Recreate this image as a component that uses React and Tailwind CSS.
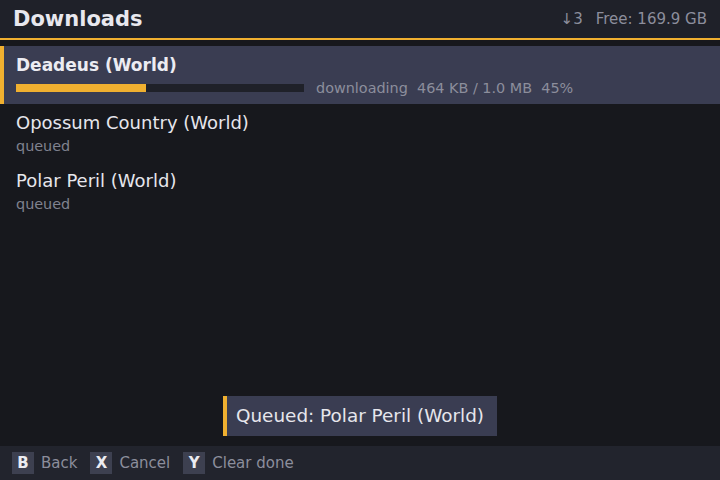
export default function App() {
  const items = [
    { title: "Opossum Country (World)", status: "queued" },
    { title: "Polar Peril (World)", status: "queued" },
  ];

  const keys = [
    ["B", "Back"],
    ["X", "Cancel"],
    ["Y", "Clear done"],
  ];

  return (
    <div
      className="w-[720px] h-[480px] flex flex-col bg-[#17181d] text-[#e6e6ec] overflow-hidden"
      style={{ fontFamily: '"DejaVu Sans", sans-serif' }}
    >
      <div className="h-[38px] shrink-0 flex items-center justify-between pl-[13px] pr-[13px] bg-[#1f2129]">
        <h1 className="text-[21px] font-bold leading-none text-[#e8e8ee]">Downloads</h1>
        <div className="flex items-center gap-[13px] text-[15px] text-[#8c8e9c]">
          <span>↓3</span>
          <span>Free: 169.9 GB</span>
        </div>
      </div>
      <div className="h-[2px] shrink-0 bg-[#f0b030]" />

      <div className="flex-1 flex flex-col pt-[6px]">
        <div className="h-[58px] flex bg-[#3a3d52]">
          <div className="w-[4px] bg-[#f0b030]" />
          <div className="flex-1 flex flex-col pl-[12px] pt-[7px]">
            <div className="text-[17px] font-bold leading-[24px] text-[#ececf2]">Deadeus (World)</div>
            <div className="flex items-center gap-[12px] mt-[3px]">
              <div className="w-[288px] h-[8px] bg-[#1f2129]">
                <div className="h-full w-[130px] bg-[#f0b030]" />
              </div>
              <span className="text-[14.4px] text-[#8c8e9c] leading-none pt-[1px]">
                downloading&nbsp; 464 KB / 1.0 MB&nbsp; 45%
              </span>
            </div>
          </div>
        </div>

        {items.map((it) => (
          <div key={it.title} className="h-[58px] flex flex-col pl-[16px] pt-[7px]">
            <div className="text-[18px] leading-[24px] text-[#e6e6ec]">{it.title}</div>
            <div className="text-[14.4px] leading-[18px] mt-[2px] text-[#80828f]">{it.status}</div>
          </div>
        ))}

        <div className="flex-1" />

        <div className="flex justify-center mb-[10px]">
          <div className="flex h-[40px] bg-[#3a3d52]">
            <div className="w-[4px] bg-[#f0b030]" />
            <div className="flex items-center pl-[9px] pr-[13px] text-[18.4px] text-[#e6e6ec]">
              Queued: Polar Peril (World)
            </div>
          </div>
        </div>
      </div>

      <div className="h-[34px] shrink-0 flex items-center gap-[13px] px-[12px] bg-[#22242d] text-[15px] text-[#8c8e9c]">
        {keys.map(([k, label]) => (
          <div key={k} className="flex items-center gap-[7px]">
            <span className="w-[22px] h-[22px] flex items-center justify-center bg-[#3d4050] text-[#ececf2] font-bold text-[15px]">
              {k}
            </span>
            <span>{label}</span>
          </div>
        ))}
      </div>
    </div>
  );
}
